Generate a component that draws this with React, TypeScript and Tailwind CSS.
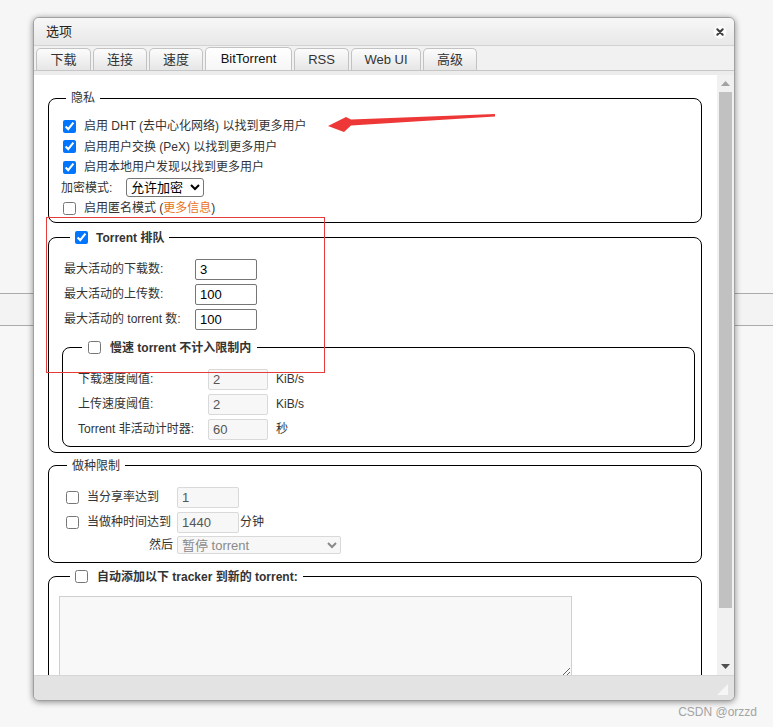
import React from "react";

// qBittorrent Web UI – 选项 / BitTorrent tab

const TABS = [
  { label: "下载", w: "w-[55px]" },
  { label: "连接", w: "w-[54px]" },
  { label: "速度", w: "w-[54px]" },
  { label: "BitTorrent", w: "w-[87px]", active: true },
  { label: "RSS", w: "w-[55px]" },
  { label: "Web UI", w: "w-[70px]" },
  { label: "高级", w: "w-[54px]" },
];

function Check({ checked, className = "" }: { checked?: boolean; className?: string }) {
  return (
    <input
      type="checkbox"
      defaultChecked={checked}
      className={`m-0 w-[13px] h-[13px] shrink-0 ${className}`}
    />
  );
}

function NumInput({ value, disabled, w }: { value: string; disabled?: boolean; w: string }) {
  return (
    <input
      type="text"
      defaultValue={value}
      disabled={disabled}
      className={`${w} h-[21px] px-[4px] text-[13px] rounded-[2px] border ${
        disabled
          ? "bg-[#f7f7f7] border-[#d9d9d9] text-[#555]"
          : "bg-white border-[#767676] text-black"
      }`}
    />
  );
}

function Privacy() {
  const rows = [
    "启用 DHT (去中心化网络) 以找到更多用户",
    "启用用户交换 (PeX) 以找到更多用户",
    "启用本地用户发现以找到更多用户",
  ];
  return (
    <fieldset className="mt-[14px] border border-black rounded-[8px] pl-[12px] pr-[10px] pt-[9px] pb-[3px]">
      <legend className="ml-[5px] px-[5px] h-[18px] leading-[18px]">隐私</legend>
      {rows.map((r) => (
        <div key={r} className="h-[20.5px] flex items-center">
          <Check checked className="ml-[2px]" />
          <span className="ml-[8px]">{r}</span>
        </div>
      ))}
      <div className="h-[20.5px] flex items-center">
        <span className="w-[65px]">加密模式:</span>
        <select
          defaultValue="allow"
          className="w-[78px] h-[19px] border border-[#767676] rounded-[3px] text-[13px] text-black bg-white"
        >
          <option value="allow">允许加密</option>
        </select>
      </div>
      <div className="h-[20.5px] flex items-center">
        <Check className="ml-[2px]" />
        <span className="ml-[8px]">
          启用匿名模式 (<span className="text-[#e8731a]">更多信息</span>)
        </span>
      </div>
    </fieldset>
  );
}

function Queueing() {
  const rows = [
    ["最大活动的下载数:", "3"],
    ["最大活动的上传数:", "100"],
    ["最大活动的 torrent 数:", "100"],
  ];
  const slow = [
    ["下载速度阈值:", "2", "KiB/s"],
    ["上传速度阈值:", "2", "KiB/s"],
    ["Torrent 非活动计时器:", "60", "秒"],
  ];
  return (
    <fieldset className="mt-[6px] border border-black rounded-[8px] pl-[13px] pr-[6px] pt-[10px] pb-[5px]">
      <legend className="ml-[8px] px-[5px]">
        <div className="h-[18px] flex items-center">
          <Check checked />
          <span className="ml-[8px] font-bold">Torrent 排队</span>
        </div>
      </legend>
      {rows.map(([l, v]) => (
        <div key={l} className="h-[25px] flex items-center pl-[2px]">
          <span className="w-[131px]">{l}</span>
          <NumInput value={v} w="w-[62px]" />
        </div>
      ))}
      <fieldset className="mt-[7px] border border-black rounded-[8px] pl-[15px] pr-[10px] pt-[10px] pb-[4px]">
        <legend className="ml-[4px] px-[6px]">
          <div className="h-[18px] flex items-center">
            <Check />
            <span className="ml-[9px] font-bold">慢速 torrent 不计入限制内</span>
          </div>
        </legend>
        {slow.map(([l, v, u]) => (
          <div key={l} className="h-[25px] flex items-center">
            <span className="w-[130px]">{l}</span>
            <NumInput value={v} w="w-[60px]" disabled />
            <span className="ml-[8px]">{u}</span>
          </div>
        ))}
      </fieldset>
    </fieldset>
  );
}

function Seeding() {
  return (
    <fieldset className="mt-[4px] border border-black rounded-[8px] pl-[13px] pr-[10px] pt-[10px] pb-[6px]">
      <legend className="ml-[5px] px-[5px] h-[18px] leading-[18px]">做种限制</legend>
      <div className="h-[25px] flex items-center">
        <div className="w-[115px] flex items-center">
          <Check className="ml-[4px]" />
          <span className="ml-[8px]">当分享率达到</span>
        </div>
        <NumInput value="1" w="w-[62px]" disabled />
      </div>
      <div className="h-[25px] flex items-center">
        <div className="w-[115px] flex items-center">
          <Check className="ml-[4px]" />
          <span className="ml-[8px]">当做种时间达到</span>
        </div>
        <NumInput value="1440" w="w-[62px]" disabled />
        <span className="ml-[1px]">分钟</span>
      </div>
      <div className="h-[21px] flex items-center">
        <span className="w-[115px] text-right pr-[4px]">然后</span>
        <select
          disabled
          defaultValue="pause"
          className="w-[164px] h-[18px] border border-[#d9d9d9] rounded-[2px] bg-[#f7f7f7] text-[13px] text-[#8a8a8a]"
        >
          <option value="pause">暂停 torrent</option>
        </select>
      </div>
    </fieldset>
  );
}

function Trackers() {
  return (
    <fieldset className="mt-[5px] border border-black rounded-[8px] pl-[10px] pr-[10px] pt-[10px] pb-[6px]">
      <legend className="ml-[11px] px-[5px]">
        <div className="h-[18px] flex items-center">
          <Check />
          <span className="ml-[9px] font-bold">自动添加以下 tracker 到新的 torrent:</span>
        </div>
      </legend>
      <textarea
        disabled
        className="block w-[513px] h-[81px] border border-[#cfcfcf] bg-[#f8f8f8]"
      />
    </fieldset>
  );
}

function Scrollbar() {
  return (
    <div className="w-[17px] shrink-0 bg-[#f1f1f1] flex flex-col items-center">
      <div className="h-[17px] w-full flex items-center justify-center">
        <svg width="9" height="5" viewBox="0 0 9 5">
          <polygon points="4.5,0 9,5 0,5" fill="#a3a3a3" />
        </svg>
      </div>
      <div className="w-[13px] h-[516px] bg-[#c1c1c1]" />
      <div className="flex-1" />
      <div className="h-[17px] w-full flex items-center justify-center">
        <svg width="9" height="5" viewBox="0 0 9 5">
          <polygon points="0,0 9,0 4.5,5" fill="#505050" />
        </svg>
      </div>
    </div>
  );
}

function Dialog() {
  return (
    <div className="absolute left-[33px] top-[17px] w-[702px] h-[684px] flex flex-col rounded-[6px] border border-[#a0a0a0] bg-[#f2f2f2] overflow-hidden shadow-[0_1px_6px_rgba(0,0,0,0.45)]">
      {/* title bar */}
      <div className="h-[28px] shrink-0 flex items-center justify-between pl-[12px] pr-[7px] bg-gradient-to-b from-[#f7f7f7] to-[#e8e8e8] border-b border-[#d2d2d2]">
        <span className="text-[13px] text-[#222]">选项</span>
        <svg width="14" height="14" viewBox="0 0 14 14">
          <circle cx="7" cy="7" r="6.5" fill="#fbfbfb" />
          <path d="M4.3 4.3 L9.7 9.7 M9.7 4.3 L4.3 9.7" stroke="#3c3c3c" strokeWidth="2" strokeLinecap="round" />
        </svg>
      </div>
      {/* tabs */}
      <div className="h-[25px] shrink-0 flex items-end gap-[2px] pl-[2px] bg-[#f1f1f1] border-b border-[#c6c6c6]">
        {TABS.map((t) => (
          <div
            key={t.label}
            className={`${t.w} flex items-center justify-center rounded-t-[5px] border border-b-0 border-[#c2c2c2] text-[13px] ${
              t.active
                ? "h-[23px] bg-gradient-to-b from-white to-[#f6f6f6] text-[#111]"
                : "h-[22px] bg-gradient-to-b from-[#fcfcfc] to-[#e6e6e6] text-[#333]"
            }`}
          >
            {t.label}
          </div>
        ))}
      </div>
      <div className="h-[4px] shrink-0 bg-[#ececec]" />
      {/* content */}
      <div className="flex-1 min-h-0 flex bg-white">
        <div className="flex-1 overflow-hidden pl-[14px] pr-[15px]">
          <Privacy />
          <Queueing />
          <Seeding />
          <Trackers />
        </div>
        <Scrollbar />
      </div>
      {/* footer */}
      <div className="h-[25px] shrink-0 bg-[#e3e3e3] border-t border-[#d6d6d6] flex items-end justify-end pr-[6px] pb-[5px]">
        <svg width="11" height="11" viewBox="0 0 11 11">
          <polygon points="11,0 11,11 0,11" fill="#f6f6f6" />
        </svg>
      </div>
    </div>
  );
}

export default function App() {
  return (
    <div className="relative w-[773px] h-[727px] overflow-hidden bg-[#f7f7f7] font-['Liberation_Sans','Noto_Sans_CJK_SC',sans-serif] text-[12px] text-[#333]">
      {/* page behind the modal */}
      <div className="h-[293px] bg-[#f6f6f6]" />
      <div className="h-[33px] border-y border-[#ababab] bg-[#f3f3f3]" />

      <Dialog />

      {/* annotation overlays */}
      <svg className="absolute left-0 top-0" width="773" height="727">
        <polygon
          points="328,126 346,117 351,119.5 495,114 495,116.5 351,125.5 344,132"
          fill="#ee3737"
        />
      </svg>
      <div className="absolute left-[46px] top-[217px] w-[279px] h-[156px] border border-[#e63b3b]" />

      <div className="absolute right-[16px] bottom-[6px] text-[12px] text-[#a3a3a3]">CSDN @orzzd</div>
    </div>
  );
}
